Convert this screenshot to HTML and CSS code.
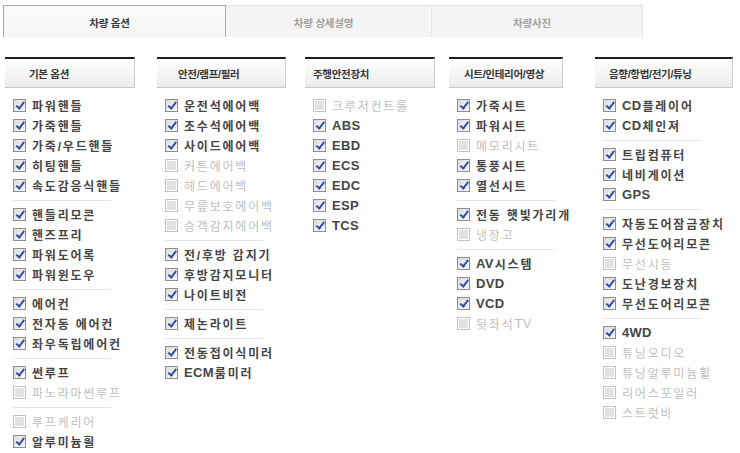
FILE: index.html
```html
<!DOCTYPE html>
<html lang="ko">
<head>
<meta charset="utf-8">
<title>차량 옵션</title>
<link rel="stylesheet" href="styles.css">
</head>
<body>
<div class="page">
  <div class="tabs">
    <div class="tab tab-1 active">차량 옵션</div>
    <div class="tab tab-2">차량 상세설명</div>
    <div class="tab tab-3">차량사진</div>
  </div>

  <div class="columns">
    <section class="col col-1">
      <h3 class="col-head head-1">기본 옵션</h3>
      <ul class="opts">
        <li class="on"><span class="cb"></span>파워핸들</li>
        <li class="on"><span class="cb"></span>가죽핸들</li>
        <li class="on"><span class="cb"></span>가죽/우드핸들</li>
        <li class="on"><span class="cb"></span>히팅핸들</li>
        <li class="on"><span class="cb"></span>속도감응식핸들</li>
        <li class="sep"></li>
        <li class="on"><span class="cb"></span>핸들리모콘</li>
        <li class="on"><span class="cb"></span>핸즈프리</li>
        <li class="on"><span class="cb"></span>파워도어록</li>
        <li class="on"><span class="cb"></span>파워윈도우</li>
        <li class="sep"></li>
        <li class="on"><span class="cb"></span>에어컨</li>
        <li class="on"><span class="cb"></span>전자동 에어컨</li>
        <li class="on"><span class="cb"></span>좌우독립에어컨</li>
        <li class="sep"></li>
        <li class="on"><span class="cb"></span>썬루프</li>
        <li class="off"><span class="cb"></span>파노라마썬루프</li>
        <li class="sep"></li>
        <li class="off"><span class="cb"></span>루프케리어</li>
        <li class="on"><span class="cb"></span>알루미늄휠</li>
      </ul>
    </section>

    <section class="col col-2">
      <h3 class="col-head head-2">안전/램프/필러</h3>
      <ul class="opts">
        <li class="on"><span class="cb"></span>운전석에어백</li>
        <li class="on"><span class="cb"></span>조수석에어백</li>
        <li class="on"><span class="cb"></span>사이드에어백</li>
        <li class="off"><span class="cb"></span>커튼에어백</li>
        <li class="off"><span class="cb"></span>헤드에어백</li>
        <li class="off"><span class="cb"></span>무릎보호에어백</li>
        <li class="off"><span class="cb"></span>승객감지에어백</li>
        <li class="sep"></li>
        <li class="on"><span class="cb"></span>전/후방 감지기</li>
        <li class="on"><span class="cb"></span>후방감지모니터</li>
        <li class="on"><span class="cb"></span>나이트비전</li>
        <li class="sep"></li>
        <li class="on"><span class="cb"></span>제논라이트</li>
        <li class="sep"></li>
        <li class="on"><span class="cb"></span>전동접이식미러</li>
        <li class="on"><span class="cb"></span><span class="lat">ECM</span>룸미러</li>
      </ul>
    </section>

    <section class="col col-3">
      <h3 class="col-head head-3">주행안전장치</h3>
      <ul class="opts">
        <li class="off"><span class="cb"></span>크루저컨트롤</li>
        <li class="on"><span class="cb"></span><span class="lat">ABS</span></li>
        <li class="on"><span class="cb"></span><span class="lat">EBD</span></li>
        <li class="on"><span class="cb"></span><span class="lat">ECS</span></li>
        <li class="on"><span class="cb"></span><span class="lat">EDC</span></li>
        <li class="on"><span class="cb"></span><span class="lat">ESP</span></li>
        <li class="on"><span class="cb"></span><span class="lat">TCS</span></li>
      </ul>
    </section>

    <section class="col col-4">
      <h3 class="col-head head-4">시트/인테리어/영상</h3>
      <ul class="opts">
        <li class="on"><span class="cb"></span>가죽시트</li>
        <li class="on"><span class="cb"></span>파워시트</li>
        <li class="off"><span class="cb"></span>메모리시트</li>
        <li class="on"><span class="cb"></span>통풍시트</li>
        <li class="on"><span class="cb"></span>열선시트</li>
        <li class="sep"></li>
        <li class="on"><span class="cb"></span>전동 햇빛가리개</li>
        <li class="off"><span class="cb"></span>냉장고</li>
        <li class="sep"></li>
        <li class="on"><span class="cb"></span><span class="lat">AV</span>시스템</li>
        <li class="on"><span class="cb"></span><span class="lat">DVD</span></li>
        <li class="on"><span class="cb"></span><span class="lat">VCD</span></li>
        <li class="off"><span class="cb"></span>뒷좌석<span class="lat">TV</span></li>
      </ul>
    </section>

    <section class="col col-5">
      <h3 class="col-head head-5">음향/항법/전기/튜닝</h3>
      <ul class="opts">
        <li class="on"><span class="cb"></span><span class="lat">CD</span>플레이어</li>
        <li class="on"><span class="cb"></span><span class="lat">CD</span>체인져</li>
        <li class="sep"></li>
        <li class="on"><span class="cb"></span>트립컴퓨터</li>
        <li class="on"><span class="cb"></span>네비게이션</li>
        <li class="on"><span class="cb"></span><span class="lat">GPS</span></li>
        <li class="sep"></li>
        <li class="on"><span class="cb"></span>자동도어잠금장치</li>
        <li class="on"><span class="cb"></span>무선도어리모콘</li>
        <li class="off"><span class="cb"></span>무선시동</li>
        <li class="on"><span class="cb"></span>도난경보장치</li>
        <li class="on"><span class="cb"></span>무선도어리모콘</li>
        <li class="sep"></li>
        <li class="on"><span class="cb"></span><span class="lat">4WD</span></li>
        <li class="off"><span class="cb"></span>튜닝오디오</li>
        <li class="off"><span class="cb"></span>튜닝알루미늄휠</li>
        <li class="off"><span class="cb"></span>리어스포일러</li>
        <li class="off"><span class="cb"></span>스트럿바</li>
      </ul>
    </section>
  </div>
</div>
</body>
</html>
```

FILE: styles.css
```css
html, body {
  margin: 0;
  padding: 0;
  background: #ffffff;
}

body {
  font-family: "Liberation Sans", "Noto Sans CJK KR", Arial, sans-serif;
  color: #444;
}

.page {
  padding: 5px 0 0 3px;
}

/* ---------- tabs ---------- */
.tabs {
  display: flex;
  height: 32px;
}

.tab {
  box-sizing: border-box;
  height: 32px;
  display: flex;
  align-items: center;
  justify-content: center;
  padding-right: 10px;
  padding-top: 2px;
  font-size: 10.5px;
  font-weight: 700;
  color: #a0a0a0;
  background: #f4f4f4;
  border-top: 1px solid #e2e2e2;
  border-right: 1px solid #e4e4e4;
  letter-spacing: -0.2px;
}

.tab-1 { width: 223px; }
.tab-2 { width: 206px; }
.tab-3 { width: 211px; }

.tab.active {
  color: #3a3a3a;
  background: linear-gradient(#fbfbfb, #f5f5f5);
  border: 1px solid #a9a9a9;
  border-bottom: none;
}

/* ---------- columns ---------- */
.columns {
  display: flex;
  align-items: flex-start;
  margin-top: 20px;
}

.col-1 { width: 130px; margin-left: 2px; }
.col-2 { width: 129px; margin-left: 22px; }
.col-3 { width: 130px; margin-left: 19px; }
.col-4 { width: 114px; margin-left: 14px; }
.col-5 { width: 138px; margin-left: 32px; }

.col-head {
  box-sizing: border-box;
  margin: 0;
  height: 31px;
  display: flex;
  align-items: center;
  border-top: 2px solid #1e1e1e;
  border-right: 1px solid #cfcfcf;
  border-bottom: 1px solid #c8c8c8;
  background: linear-gradient(#ffffff, #f2f2f2 70%, #e9e9e9);
  font-size: 10.5px;
  font-weight: 700;
  color: #363636;
  letter-spacing: -0.3px;
}

.head-1 { padding-left: 24px; }
.head-2 { padding-left: 21px; }
.head-3 { padding-left: 8px; }
.head-4 { padding-left: 15px; }
.head-5 { padding-left: 14px; }

/* ---------- option lists ---------- */
.opts {
  list-style: none;
  margin: 7px 0 0;
  padding: 0 0 0 8px;
}

.opts li {
  display: flex;
  align-items: center;
  height: 20px;
  font-size: 12px;
  letter-spacing: 1.8px;
  white-space: nowrap;
}

.opts li .lat {
  letter-spacing: 0.3px;
  font-size: 13px;
  margin-right: 1px;
}

.opts li.on {
  color: #454545;
  font-weight: 700;
}

.opts li.off {
  color: #c0c0c0;
  font-weight: 400;
}

.opts li.sep {
  height: 1px;
  width: 98px;
  margin: 5px 0 3px;
  background: #e6e6e6;
}

/* ---------- checkbox ---------- */
.cb {
  position: relative;
  box-sizing: border-box;
  flex: none;
  width: 13px;
  height: 13px;
  margin-right: 6px;
  border: 1px solid #8e8e8e;
  background: linear-gradient(135deg, #dcdcdc, #f8f8f8);
}

.on .cb::after {
  content: "";
  position: absolute;
  left: 3.5px;
  top: 0.5px;
  width: 2.5px;
  height: 6.5px;
  border-right: 2px solid #3050a8;
  border-bottom: 2px solid #3050a8;
  transform: rotate(38deg);
}

.off .cb {
  border-color: #c2c2c2;
  background: #ffffff;
  box-shadow: inset 0 0 0 1px #fff, inset 0 0 0 6px #e2e2e2;
}
```
